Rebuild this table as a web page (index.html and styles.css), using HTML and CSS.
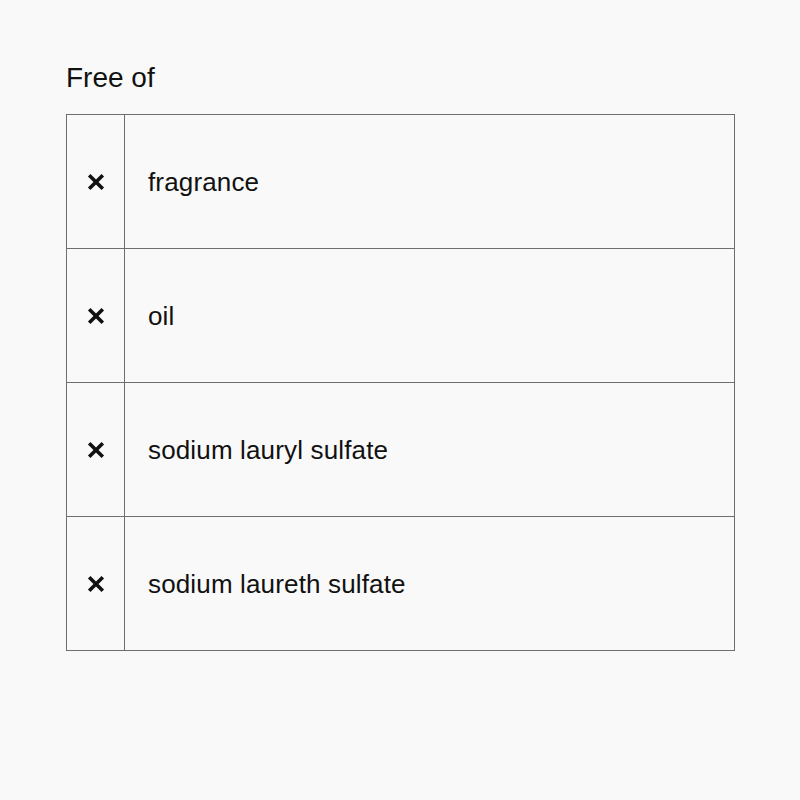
FILE: index.html
```html
<!DOCTYPE html>
<html lang="en">
<head>
<meta charset="utf-8">
<title>Free of</title>
<link rel="stylesheet" href="styles.css">
</head>
<body>
<main class="page">
  <h2 class="title">Free of</h2>
  <ul class="list">
    <li class="row">
      <span class="mark"><svg viewBox="0 0 18 18" width="18" height="18"><path d="M2.2 2.2 L15.8 15.8 M15.8 2.2 L2.2 15.8"/></svg></span>
      <span class="label">fragrance</span>
    </li>
    <li class="row">
      <span class="mark"><svg viewBox="0 0 18 18" width="18" height="18"><path d="M2.2 2.2 L15.8 15.8 M15.8 2.2 L2.2 15.8"/></svg></span>
      <span class="label">oil</span>
    </li>
    <li class="row">
      <span class="mark"><svg viewBox="0 0 18 18" width="18" height="18"><path d="M2.2 2.2 L15.8 15.8 M15.8 2.2 L2.2 15.8"/></svg></span>
      <span class="label">sodium lauryl sulfate</span>
    </li>
    <li class="row">
      <span class="mark"><svg viewBox="0 0 18 18" width="18" height="18"><path d="M2.2 2.2 L15.8 15.8 M15.8 2.2 L2.2 15.8"/></svg></span>
      <span class="label">sodium laureth sulfate</span>
    </li>
  </ul>
</main>
</body>
</html>
```

FILE: styles.css
```css
html, body {
  margin: 0;
  padding: 0;
  background: #f9f9f9;
}
body {
  font-family: "Liberation Sans", Arial, sans-serif;
  color: #111;
}
.page {
  padding: 62px 66px 0 66px;
}
.title {
  margin: 0 0 20px 0;
  font-size: 28px;
  line-height: 32px;
  font-weight: 400;
}
.list {
  list-style: none;
  margin: 0;
  padding: 0;
  width: 669px;
  box-sizing: border-box;
  border: 1px solid #6e6e6e;
  border-bottom: none;
}
.row {
  display: grid;
  grid-template-columns: 58px 1fr;
  height: 134px;
  box-sizing: border-box;
  border-bottom: 1px solid #6e6e6e;
}
.mark {
  display: flex;
  align-items: center;
  justify-content: center;
  border-right: 1px solid #6e6e6e;
  padding-top: 1px;
}
.mark svg {
  display: block;
}
.mark path {
  stroke: #111;
  stroke-width: 3.6;
  fill: none;
}
.label {
  display: flex;
  align-items: center;
  padding-left: 23px;
  font-size: 26px;
  line-height: 30px;
  letter-spacing: 0.15px;
}
```
